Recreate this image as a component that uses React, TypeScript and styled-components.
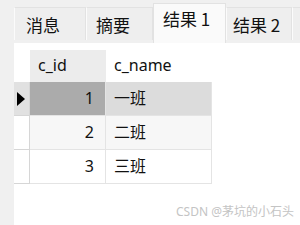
import styled, { createGlobalStyle } from 'styled-components';

const GlobalStyle = createGlobalStyle`
	html, body {
		margin: 0;
		padding: 0;
		background: #f0f0f0;
	}
	* {
		box-sizing: border-box;
	}
`;

const tabs = [
	{ label: '消息', width: 72, pad: 11 },
	{ label: '摘要', width: 67, pad: 9 },
	{ label: '结果 1', width: 73, pad: 9, active: true },
	{ label: '结果 2', width: 66, pad: 6 },
	{ label: '', width: 30, pad: 6 },
];

const rows = [
	{ id: 1, name: '一班' },
	{ id: 2, name: '二班' },
	{ id: 3, name: '三班' },
];

export default function App() {
	return (
		<Window>
			<GlobalStyle />
			<TabBar>
				{tabs.map((t, i) => (
					<Tab
						key={i}
						$active={!!t.active}
						$width={t.width}
						$pad={t.pad}
					>
						{t.label}
					</Tab>
				))}
			</TabBar>
			<Content>
				<Grid>
					<HeaderCorner />
					<HeaderCell $selected>c_id</HeaderCell>
					<HeaderCell>c_name</HeaderCell>
					{rows.map((r, i) => (
						<Row key={r.id}>
							<Indicator $current={i === 0}>{i === 0 && <Arrow />}</Indicator>
							<Cell
								$align='right'
								$tone={i === 0 ? 'focus' : i % 2 === 1 ? 'alt' : 'plain'}
							>
								{r.id}
							</Cell>
							<Cell $tone={i === 0 ? 'row' : i % 2 === 1 ? 'alt' : 'plain'}>{r.name}</Cell>
						</Row>
					))}
				</Grid>
				<Watermark>CSDN @茅坑的小石头</Watermark>
			</Content>
		</Window>
	);
}

const Window = styled.div`
	width: 300px;
	height: 225px;
	display: flex;
	flex-direction: column;
	overflow: hidden;
	background: #f0f0f0;
	font-family: 'Noto Sans', 'Noto Sans CJK SC', sans-serif;
	color: #111;
`;

const TabBar = styled.div`
	height: 43px;
	display: flex;
	align-items: flex-start;
	padding-left: 14px;
	flex-shrink: 0;
`;

const Tab = styled.div<{ $active: boolean; $width: number; $pad: number }>`
	width: ${(p) => p.$width}px;
	flex-shrink: 0;
	margin-top: ${(p) => (p.$active ? 3 : 7)}px;
	height: ${(p) => (p.$active ? 40 : 33)}px;
	padding: ${(p) => (p.$active ? 2 : 4)}px 0 0 ${(p) => p.$pad}px;
	background: ${(p) => (p.$active ? '#fafafa' : '#eeeeee')};
	border: 1px solid #e2e2e2;
	border-bottom: none;
	border-left-color: ${(p) => (p.$active ? '#e2e2e2' : '#fbfbfb')};
	font-family: 'Noto Sans CJK SC', sans-serif;
	font-size: 17px;
	line-height: 26px;
	color: #111;
	white-space: nowrap;
`;

const Content = styled.div`
	position: relative;
	flex: 1;
	margin-left: 14px;
	background: #ffffff;
	padding-top: 7px;
`;

const Grid = styled.div`
	display: grid;
	grid-template-columns: 16px 76px 106px;
	width: 198px;
`;

const HeaderCorner = styled.div`
	height: 32px;
	background: #ffffff;
`;

const HeaderCell = styled.div<{ $selected?: boolean }>`
	height: 32px;
	padding-left: 8px;
	background: ${(p) => (p.$selected ? '#ececec' : '#ffffff')};
	font-size: 16px;
	line-height: 30px;
	color: #111;
`;

const Row = styled.div`
	display: contents;
`;

const Indicator = styled.div<{ $current: boolean }>`
	height: 34px;
	background: ${(p) => (p.$current ? '#e1e1e1' : '#ffffff')};
	border-right: 1px solid #d6d6d6;
	border-bottom: 1px solid #d6d6d6;
	display: flex;
	align-items: center;
	padding-left: 3px;
`;

const Arrow = styled.div`
	width: 0;
	height: 0;
	border-top: 7px solid transparent;
	border-bottom: 7px solid transparent;
	border-left: 8px solid #000;
`;

const tones = {
	focus: '#ababab',
	row: '#dcdcdc',
	alt: '#f7f7f7',
	plain: '#ffffff',
};

const Cell = styled.div<{ $align?: 'left' | 'right'; $tone: keyof typeof tones }>`
	height: 34px;
	background: ${(p) => tones[p.$tone]};
	border-right: 1px solid #e4e4e4;
	border-bottom: 1px solid #e4e4e4;
	text-align: ${(p) => p.$align ?? 'left'};
	padding: 0 11px 0 8px;
	font-family: 'Noto Sans', 'Noto Sans CJK SC', sans-serif;
	font-size: 16px;
	line-height: 32px;
	color: #111;
`;

const Watermark = styled.div`
	position: absolute;
	right: 6px;
	bottom: 5px;
	font-family: 'Noto Sans', 'Noto Sans CJK SC', sans-serif;
	font-size: 12px;
	line-height: 16px;
	color: #c4c4c4;
	white-space: nowrap;
`;
